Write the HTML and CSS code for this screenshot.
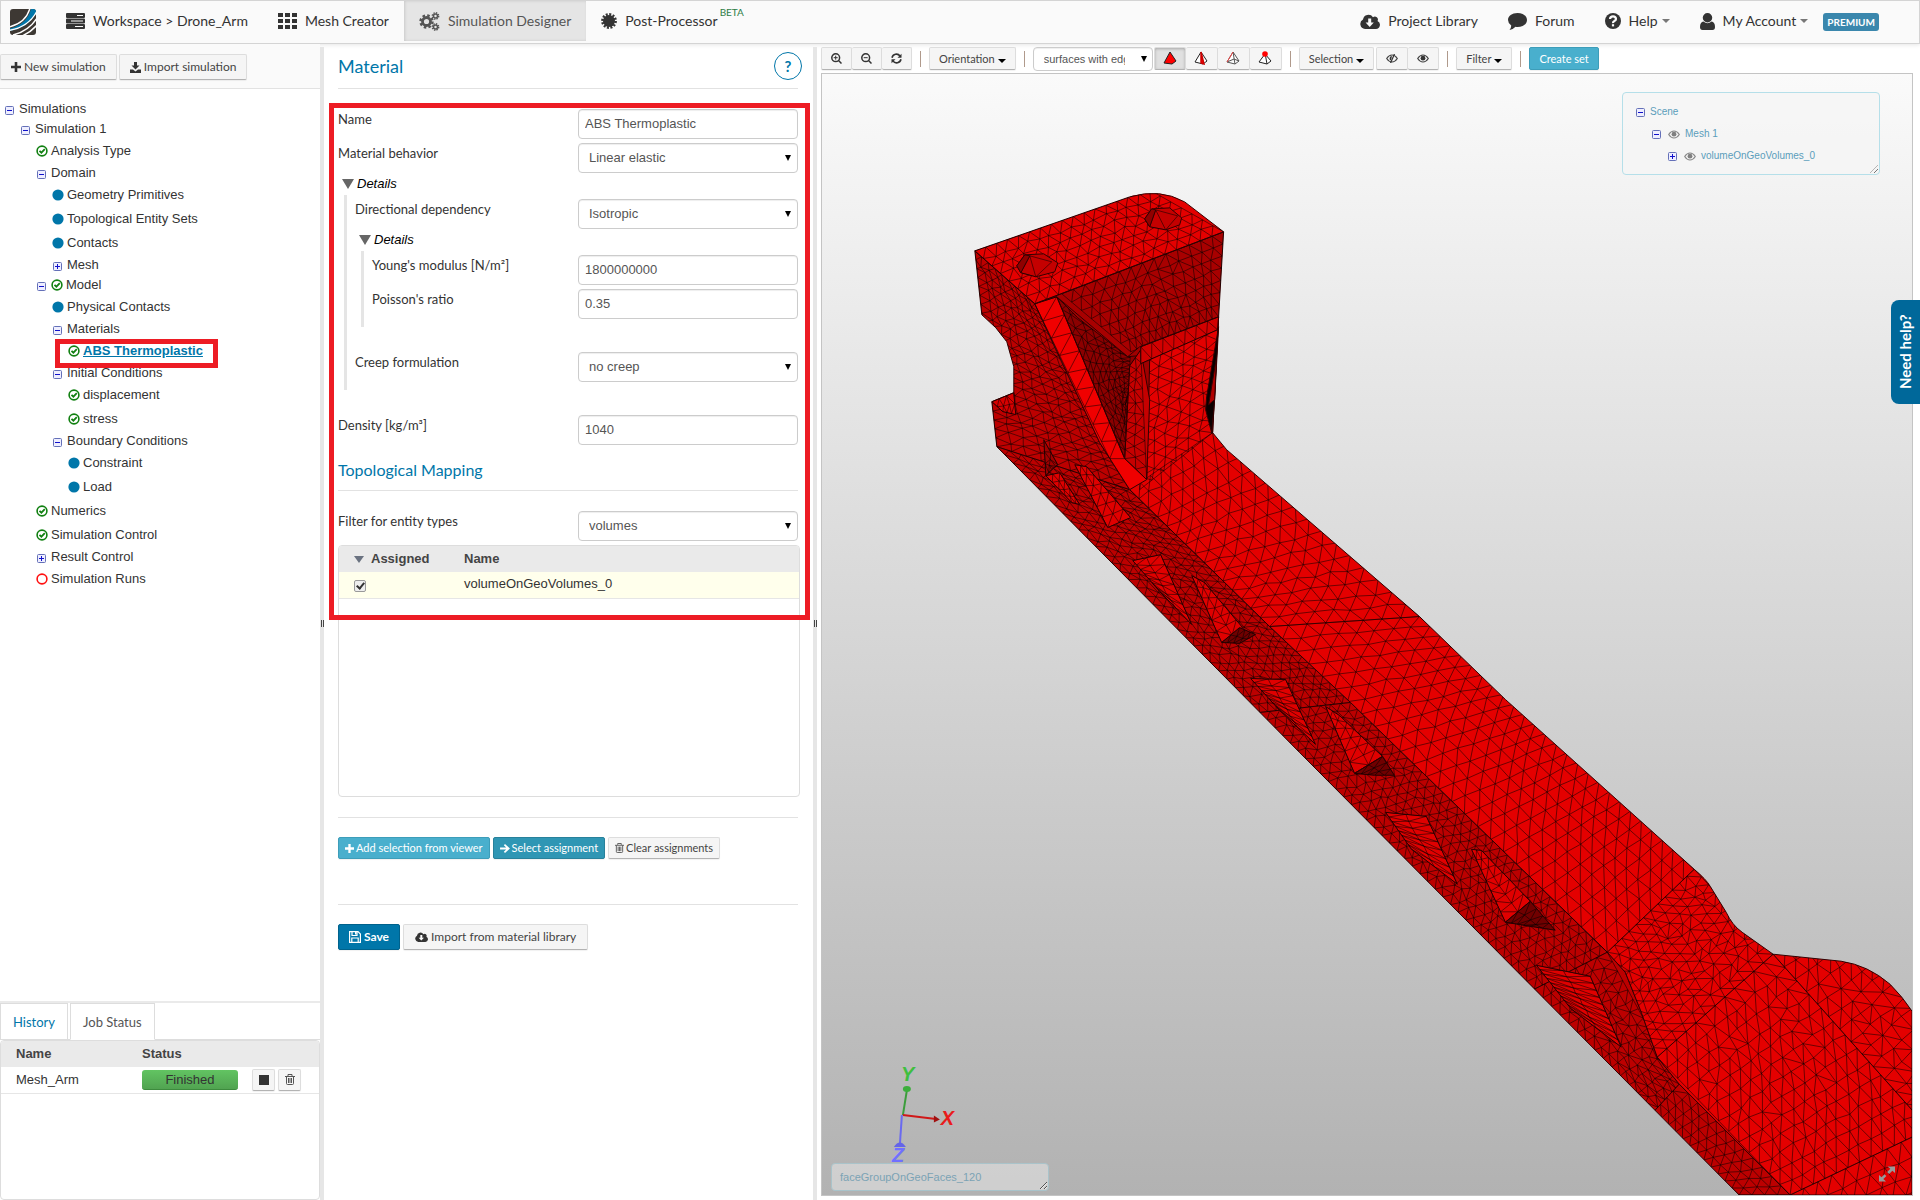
FILE: index.html
```html
<!DOCTYPE html>
<html lang="en">
<head>
<meta charset="utf-8">
<title>Simulation Designer</title>
<link rel="stylesheet" href="styles.css">
</head>
<body>
<svg class="defs" aria-hidden="true">
  <symbol id="i-server" viewBox="0 0 19 16"><path fill="#333" d="M1 0h17q1 0 1 1v3q0 1-1 1H1q-1 0-1-1V1q0-1 1-1zM1 5.500h17q1 0 1 1v3q0 1-1 1H1q-1 0-1-1v-3q0-1 1-1zM1 11h17q1 0 1 1v3q0 1-1 1H1q-1 0-1-1v-3q0-1 1-1z"/><path stroke="#fafafa" d="M11 2.500h6M5 8h12M9 13.500h8"/></symbol>
  <symbol id="i-grid" viewBox="0 0 19 16"><path fill="#333" d="M0 0h5v4H0zM7 0h5v4H7zM14 0h5v4h-5zM0 6h5v4H0zM7 6h5v4H7zM14 6h5v4h-5zM0 12h5v4H0zM7 12h5v4H7zM14 12h5v4h-5z"/></symbol>
  <symbol id="i-gears" viewBox="0 0 21 19"><g fill="none" stroke="#555"><circle cx="7.500" cy="9.500" r="4" stroke-width="2.800"/><circle cx="7.500" cy="9.500" r="6" stroke-width="2.400" stroke-dasharray="2.500 2.212"/><circle cx="16.500" cy="4" r="2" stroke-width="1.500"/><circle cx="16.500" cy="4" r="3.200" stroke-width="1.400" stroke-dasharray="1.400 1.113"/><circle cx="16.500" cy="15" r="2" stroke-width="1.500"/><circle cx="16.500" cy="15" r="3.200" stroke-width="1.400" stroke-dasharray="1.400 1.113"/></g></symbol>
  <symbol id="i-burst" viewBox="0 0 16 16"><circle cx="8" cy="8" r="6" fill="#333"/><circle cx="8" cy="8" r="6.600" fill="none" stroke="#333" stroke-width="2.600" stroke-dasharray="2 1.456"/></symbol>
  <symbol id="i-cloud" viewBox="0 0 20 15"><path d="M5 15a5 5 0 0 1-2-9.400A5.500 5.500 0 0 1 13 3.200 3 3 0 0 1 17.500 7 4.200 4.200 0 0 1 16 15z"/><path fill="#fafafa" d="M8.200 4.500h3v4h2.600L9.700 13 5.600 8.500h2.600z"/></symbol>
  <symbol id="i-chat" viewBox="0 0 19 17"><path fill="#333" d="M9.500 0C15 0 19 3 19 7s-4 7-9.500 7q-1 0-2-.2Q5 16.600 1.500 17q1.800-2 1.700-4.600Q0 10.200 0 7c0-4 4-7 9.500-7z"/></symbol>
  <symbol id="i-help" viewBox="0 0 16 16"><circle cx="8" cy="8" r="8" fill="#333"/><path fill="none" stroke="#fafafa" stroke-width="2.200" d="M5 6q.2-2.600 3-2.600T11 6q0 1.300-1.600 2.100T8 10.200"/><path fill="#fafafa" d="M6.900 11.200h2.200v2.200H6.900z"/></symbol>
  <symbol id="i-user" viewBox="0 0 15 17"><path fill="#333" d="M7.500 0a4.300 4.300 0 0 1 0 9.500 4.300 4.300 0 0 1 0-9.500zM3.500 8.500Q7.500 12 11.500 8.500 15 9 15 14q0 3-2.500 3h-10Q0 17 0 14q0-5 3.500-5.500z"/></symbol>
  <symbol id="i-plus" viewBox="0 0 10 10"><path d="M3.700 0h2.600v3.700H10v2.600H6.300V10H3.700V6.300H0V3.700h3.700z"/></symbol>
  <symbol id="i-download" viewBox="0 0 11 11"><path d="M4 0h3v3.500h2.500l-4 4-4-4H4zM0 7.500h3l2.500 2 2.500-2h3V11H0z"/></symbol>
  <symbol id="i-arrow" viewBox="0 0 11 10"><path d="M5.500 0L11 5l-5.500 5-1.300-1.400L6.800 6.200H0V3.800h6.800L4.200 1.400z"/></symbol>
  <symbol id="i-trash" viewBox="0 0 10 11"><path fill="none" stroke="#555" d="M0 2.500h10M3 2V.5h4V2M1.500 2.500v7q0 1 1 1h5q1 0 1-1v-7M3.500 4v5M5 4v5M6.500 4v5"/></symbol>
  <symbol id="i-save" viewBox="0 0 12 12"><path fill="none" stroke="#fff" stroke-width="1.200" d="M.6.600h8.400l2.400 2.400v8.400H.6zM3 1v3.500h5V1M2.800 11V7h6.400v4"/><path fill="#fff" d="M6 1h1.500v2.500H6z"/></symbol>
  <symbol id="i-zoomin" viewBox="0 0 11 11"><path fill="none" stroke="#333" stroke-width="1.500" d="M7.800 7.800L10.500 10.500M4.700.8a3.900 3.900 0 1 1 0 7.800 3.900 3.900 0 0 1 0-7.800z"/><path stroke="#333" d="M2.700 4.700h4M4.700 2.700v4"/></symbol>
  <symbol id="i-zoomout" viewBox="0 0 11 11"><path fill="none" stroke="#333" stroke-width="1.500" d="M7.800 7.800L10.500 10.500M4.700.8a3.900 3.900 0 1 1 0 7.800 3.900 3.900 0 0 1 0-7.800z"/><path stroke="#333" d="M2.700 4.700h4"/></symbol>
  <symbol id="i-refresh" viewBox="0 0 11 11"><path fill="none" stroke="#333" stroke-width="1.600" d="M1 4.700a4.500 4.500 0 0 1 8-1.700M10 6.300a4.500 4.500 0 0 1-8 1.700"/><path fill="#333" d="M10.500.7v4h-4zM.5 10.300v-4h4z"/></symbol>
  <symbol id="i-eye" viewBox="0 0 12 9"><path fill="none" stroke="#444" stroke-width="1.200" d="M.7 4.500Q3 1 6 1t5.300 3.500Q9 8 6 8T.7 4.500z"/><circle cx="6" cy="4.200" r="2.400" fill="#333"/></symbol>
  <symbol id="i-eyeoff" viewBox="0 0 12 9"><path fill="none" stroke="#444" stroke-width="1.200" d="M.7 4.500Q3 1 6 1t5.300 3.500Q9 8 6 8T.7 4.500z"/><path fill="#333" d="M6 2a2.400 2.400 0 0 0-1 4.600z"/><path stroke="#333" stroke-width="1.200" d="M8.500 0l-4 9"/></symbol>
  <symbol id="i-check" viewBox="0 0 12 12"><circle cx="6" cy="6" r="4.900" fill="none" stroke="#118011" stroke-width="1.600"/><path fill="none" stroke="#118011" stroke-width="1.800" d="M3.500 5.800l1.900 1.900 3.400-3.500"/></symbol>
  <symbol id="i-dot" viewBox="0 0 12 12"><circle cx="6" cy="6" r="5.600" fill="#0076a9"/></symbol>
  <symbol id="i-ring" viewBox="0 0 12 12"><circle cx="6" cy="6" r="4.900" fill="none" stroke="#f11" stroke-width="1.600"/></symbol>
  <symbol id="i-minus-box" viewBox="0 0 9 9"><rect x=".5" y=".5" width="8" height="8" rx="1" fill="#eef" stroke="#6470b8"/><path stroke="#11c" d="M2 4.500h5"/></symbol>
  <symbol id="i-plus-box" viewBox="0 0 9 9"><rect x=".5" y=".5" width="8" height="8" rx="1" fill="#eef" stroke="#6470b8"/><path stroke="#11c" d="M2 4.500h5M4.500 2v5"/></symbol>
  <symbol id="i-logo" viewBox="0 0 26 26"><clipPath id="lc"><rect width="26" height="26" rx="3"/></clipPath><g clip-path="url(#lc)"><path fill="#3d3833" d="M0 0h26v26H0z"/><path fill="#0076a9" d="M0 19.500Q17 15 21 0h5v4Q19 18 0 22z"/><path fill="none" stroke="#fff" stroke-width="1.400" d="M-1 18Q16 14 20-1M-1 21.500Q19 18 27 2M3 26Q19 22 27 9M12 27q9-4 15-11"/></g></symbol>
</svg>

<header class="topbar">
  <a class="logo" href="#" aria-label="Home"><svg width="26" height="26"><use href="#i-logo"/></svg></a>
  <nav class="nav">
    <a href="#"><svg width="19" height="16"><use href="#i-server"/></svg>Workspace &gt; Drone_Arm</a>
    <a href="#"><svg width="19" height="16"><use href="#i-grid"/></svg>Mesh Creator</a>
    <a href="#" class="current"><svg width="21" height="19"><use href="#i-gears"/></svg>Simulation Designer</a>
    <a href="#"><svg width="16" height="16"><use href="#i-burst"/></svg>Post-Processor<sup>BETA</sup></a>
  </nav>
  <nav class="nav nav-right">
    <a href="#"><svg width="20" height="15" fill="#333"><use href="#i-cloud"/></svg>Project Library</a>
    <a href="#"><svg width="19" height="17"><use href="#i-chat"/></svg>Forum</a>
    <a href="#"><svg width="16" height="16"><use href="#i-help"/></svg>Help<i class="caret"></i></a>
    <a href="#"><svg width="15" height="17"><use href="#i-user"/></svg>My Account<i class="caret"></i></a>
  </nav>
  <span class="premium">PREMIUM</span>
</header>

<main class="workbench">
  <aside class="sidebar">
    <div class="actions">
      <button class="btn"><svg width="10" height="10" fill="#333"><use href="#i-plus"/></svg>New simulation</button>
      <button class="btn"><svg width="11" height="11" fill="#333"><use href="#i-download"/></svg>Import simulation</button>
    </div>
    <ul class="tree">
      <li class="l0 fold"><svg class="box"><use href="#i-minus-box"/></svg>Simulations</li>
      <li class="l1 fold"><svg class="box"><use href="#i-minus-box"/></svg>Simulation 1</li>
      <li class="l2"><svg><use href="#i-check"/></svg>Analysis Type</li>
      <li class="l2 fold"><svg class="box"><use href="#i-minus-box"/></svg>Domain</li>
      <li class="l3"><svg><use href="#i-dot"/></svg>Geometry Primitives</li>
      <li class="l3"><svg><use href="#i-dot"/></svg>Topological Entity Sets</li>
      <li class="l3"><svg><use href="#i-dot"/></svg>Contacts</li>
      <li class="l3 fold"><svg class="box"><use href="#i-plus-box"/></svg>Mesh</li>
      <li class="l2 fold"><svg class="box"><use href="#i-minus-box"/></svg><svg><use href="#i-check"/></svg>Model</li>
      <li class="l3"><svg><use href="#i-dot"/></svg>Physical Contacts</li>
      <li class="l3 fold"><svg class="box"><use href="#i-minus-box"/></svg>Materials</li>
      <li class="l4 marked"><svg><use href="#i-check"/></svg><a href="#">ABS Thermoplastic</a></li>
      <li class="l3 fold"><svg class="box"><use href="#i-minus-box"/></svg>Initial Conditions</li>
      <li class="l4"><svg><use href="#i-check"/></svg>displacement</li>
      <li class="l4"><svg><use href="#i-check"/></svg>stress</li>
      <li class="l3 fold"><svg class="box"><use href="#i-minus-box"/></svg>Boundary Conditions</li>
      <li class="l4"><svg><use href="#i-dot"/></svg>Constraint</li>
      <li class="l4"><svg><use href="#i-dot"/></svg>Load</li>
      <li class="l2"><svg><use href="#i-check"/></svg>Numerics</li>
      <li class="l2"><svg><use href="#i-check"/></svg>Simulation Control</li>
      <li class="l2 fold"><svg class="box"><use href="#i-plus-box"/></svg>Result Control</li>
      <li class="l2"><svg><use href="#i-ring"/></svg>Simulation Runs</li>
    </ul>
    <section class="jobs">
      <div class="tabs">
        <button class="tab">History</button>
        <button class="tab active">Job Status</button>
      </div>
      <div class="grid-box">
        <table class="data job-table">
          <thead><tr><th class="c-name">Name</th><th class="c-status">Status</th><th></th></tr></thead>
          <tbody><tr><td class="c-name">Mesh_Arm</td><td class="c-status"><span class="finished">Finished</span></td>
            <td><div class="row-tools"><button class="btn tiny" aria-label="Stop"><i class="stop"></i></button><button class="btn tiny" aria-label="Delete"><svg width="10" height="11"><use href="#i-trash"/></svg></button></div></td></tr></tbody>
        </table>
      </div>
    </section>
  </aside>
  <div class="splitter"></div>

  <section class="panel">
    <div class="panel-head"><h1>Material</h1><button class="round" aria-label="Help">?</button></div>
    <form class="form">
      <div class="row"><label for="name">Name</label><input id="name" type="text" value="ABS Thermoplastic"></div>
      <div class="row"><label for="behavior">Material behavior</label><span class="select"><select id="behavior"><option>Linear elastic</option></select></span></div>
      <details open>
        <summary>Details</summary>
        <div class="nest">
          <div class="row"><label for="dir">Directional dependency</label><span class="select"><select id="dir"><option>Isotropic</option></select></span></div>
          <details open>
            <summary>Details</summary>
            <div class="nest">
              <div class="row"><label for="young">Young's modulus [N/m²]</label><input id="young" type="text" value="1800000000"></div>
              <div class="row"><label for="poisson">Poisson's ratio</label><input id="poisson" type="text" value="0.35"></div>
            </div>
          </details>
          <div class="row"><label for="creep">Creep formulation</label><span class="select"><select id="creep"><option>no creep</option></select></span></div>
        </div>
      </details>
      <div class="row"><label for="density">Density [kg/m³]</label><input id="density" type="text" value="1040"></div>
      <h2>Topological Mapping</h2>
      <div class="row"><label for="types">Filter for entity types</label><span class="select"><select id="types"><option>volumes</option></select></span></div>
      <div class="grid-box entities">
        <table class="data">
          <thead><tr><th class="c-assigned"><i class="sort"></i>Assigned</th><th>Name</th></tr></thead>
          <tbody><tr class="picked"><td class="c-assigned"><input type="checkbox" id="vol0" checked></td><td><label for="vol0">volumeOnGeoVolumes_0</label></td></tr></tbody>
        </table>
      </div>
      <div class="form-actions small">
        <button type="button" class="btn info"><svg width="9" height="9" fill="#fff"><use href="#i-plus"/></svg>Add selection from viewer</button>
        <button type="button" class="btn teal"><svg width="10" height="9" fill="#fff"><use href="#i-arrow"/></svg>Select assignment</button>
        <button type="button" class="btn"><svg width="9" height="10"><use href="#i-trash"/></svg>Clear assignments</button>
      </div>
      <div class="form-actions">
        <button type="button" class="btn primary"><svg width="12" height="12"><use href="#i-save"/></svg>Save</button>
        <button type="button" class="btn wide"><svg width="13" height="10" fill="#333"><use href="#i-cloud"/></svg>Import from material library</button>
      </div>
      <div class="outline-box"></div>
    </form>
  </section>
  <div class="splitter"></div>

  <section class="viewer">
    <div class="toolbar">
      <div class="group"><button class="btn" aria-label="Zoom in"><svg width="11" height="11"><use href="#i-zoomin"/></svg></button><button class="btn" aria-label="Zoom out"><svg width="11" height="11"><use href="#i-zoomout"/></svg></button><button class="btn" aria-label="Reset view"><svg width="11" height="11"><use href="#i-refresh"/></svg></button></div>
      <i class="sep"></i>
      <button class="btn menu">Orientation<i class="caret"></i></button>
      <i class="sep"></i>
      <div class="group modes"><span class="select mode"><select aria-label="Render mode"><option>surfaces with edges</option></select></span>
        <button class="btn on" aria-label="Volumes"><svg width="14" height="14"><path d="M7 1L1 12l8 1 4-3z" fill="red" stroke="#222"/></svg></button><button class="btn" aria-label="Faces"><svg width="14" height="14"><path d="M7 1L1 11l8 2 4-3z" fill="#fff" stroke="#222"/><path d="M7 1v11l3 1z" fill="red" stroke="#c00" stroke-width="1.500"/></svg></button><button class="btn" aria-label="Edges"><svg width="14" height="14"><path d="M7 1L1 11l8 2 4-3zM7 1l2 12M1 11l7-3 5 2" fill="#fff" stroke="#555"/><path d="M7 1L1 11" stroke="#e44"/></svg></button><button class="btn" aria-label="Nodes"><svg width="14" height="14"><path d="M7 3L1 11l8 2 4-3zM7 2l2 11" fill="#fff" stroke="#222"/><circle cx="7" cy="3" r="2.800" fill="red"/></svg></button></div>
      <i class="sep"></i>
      <div class="group"><button class="btn menu">Selection<i class="caret"></i></button><button class="btn split" aria-label="Hide"><svg width="12" height="9"><use href="#i-eyeoff"/></svg></button><button class="btn" aria-label="Show"><svg width="12" height="9"><use href="#i-eye"/></svg></button></div>
      <i class="sep"></i>
      <button class="btn menu">Filter<i class="caret"></i></button>
      <i class="sep"></i>
      <button class="btn info">Create set</button>
    </div>
    <div class="stage">
      <svg id="scene" class="scene" viewBox="822 74 1091 1122" preserveAspectRatio="xMaxYMax slice" role="img" aria-label="Meshed drone arm"></svg>
      <div class="scene-tree">
        <div class="s0"><svg class="box"><use href="#i-minus-box"/></svg>Scene</div>
        <div class="s1"><svg class="box"><use href="#i-minus-box"/></svg><svg class="eye"><use href="#i-eye"/></svg>Mesh 1</div>
        <div class="s2"><svg class="box"><use href="#i-plus-box"/></svg><svg class="eye"><use href="#i-eye"/></svg>volumeOnGeoVolumes_0</div>
      </div>
      <textarea class="picked-name" aria-label="Hovered entity">faceGroupOnGeoFaces_120</textarea>
      <svg class="expand" width="18" height="18" viewBox="0 0 18 18"><path fill="#999" d="M9.500 1.500H17V8l-2.600-2.200-3.300 3.100-2-1.900 3.200-3.200zM8 16.500H1V10l2.500 2.200 3-2.900 1.900 1.800-3 3z"/></svg>
    </div>
  </section>
  <button class="need-help">Need help?</button>
</main>
<script src="scene.js"></script>
</body>
</html>
```
FILE: styles.css
```css
*, *::before, *::after { box-sizing: border-box; }
body { margin: 0; min-height: 100vh; display: flex; flex-direction: column; background: #fff; color: #333; font: 13px/20px "Liberation Sans", Arial, sans-serif; }
a { color: inherit; text-decoration: none; }
svg { display: block; flex: none; }
.defs { position: absolute; width: 0; height: 0; }
button, select, input, textarea { font: inherit; color: inherit; margin: 0; }

.topbar { height: 44px; display: flex; align-items: center; background: #fafafa; border: 1px solid #d4d4d4; box-shadow: 0 1px 4px rgba(0,0,0,.1); font: 14px/20px Lato, sans-serif; position: relative; }
.logo { margin: 0 15px 0 9px; }
.nav { display: flex; height: 40px; align-self: flex-start; }
.nav a { display: flex; align-items: center; gap: 8px; padding: 0 15px; }
.nav a.current { background: #e5e5e5; color: #555; box-shadow: inset 1px 0 3px rgba(0,0,0,.12); }
.nav sup { font-size: 10px; line-height: 12px; color: #2e7d46; align-self: flex-start; margin: 5px 0 0 -6px; }
.nav-right { margin-left: auto; }
.caret { width: 0; border: 4px solid transparent; border-top-color: #777; border-bottom: 0; margin-left: -4px; }
.premium { background: #3a87ad; color: #fff; border-radius: 3px; font: bold 10px/18px Lato, sans-serif; padding: 0 4px; margin: 0 40px 0 0; }

.workbench { flex: 1; display: grid; grid-template-columns: 320px 4px 489px 4px minmax(0, 1fr); position: relative; }
.splitter { background: #e6e6e6; margin-top: 3px; display: flex; align-items: center; justify-content: center; }
.splitter::before { content: ""; width: 3px; height: 7px; border: solid #444; border-width: 0 1px; }

.btn { display: inline-flex; align-items: center; justify-content: center; gap: 3px; height: 26px; padding: 0 10px; border: 1px solid #ddd; border-bottom-color: #b3b3b3; border-radius: 2px; background: #f5f5f5; color: #444; font: 12px/16px Lato, sans-serif; white-space: nowrap; box-shadow: 0 1px 1px rgba(0,0,0,.06); }
.info { background: #49afcd; border-color: #3d9db9; color: #fff; }
.teal { background: #2f96b4; border-color: #28819b; color: #fff; }
.primary { background: #0076a9; border-color: #00628c; color: #fff; font-weight: bold; }

.sidebar { display: flex; flex-direction: column; }
.actions { display: flex; gap: 2px; height: 45px; padding-top: 10px; background: #fafafa; border-bottom: 1px solid #e2e2e2; }
.tree { list-style: none; margin: 10px 0 0; padding: 0; flex: 1; }
.tree li { height: 24px; display: flex; align-items: center; gap: 3px; position: relative; }
.tree li.fold { height: 20px; }
.tree svg { width: 12px; height: 12px; }
.tree svg.box { width: 9px; height: 9px; margin: 3px 2px 0 1px; }
.l0 { padding-left: 4px; } .l1 { padding-left: 20px; } .l2 { padding-left: 36px; } .l3 { padding-left: 52px; } .l4 { padding-left: 68px; }
.marked a { color: #0076a9; font-weight: bold; text-decoration: underline; }
.marked::after { content: ""; position: absolute; left: 55px; top: 0; width: 163px; height: 29px; border: 5px solid #ed1c24; z-index: 1; }

.jobs { height: 199px; display: flex; flex-direction: column; border-top: 2px solid #eaeaea; }
.tabs { display: flex; gap: 2px; height: 37px; border-bottom: 1px solid #ddd; }
.tab { height: 37px; padding: 0 12px; border: 1px solid #ddd; background: #fff; font: 13px/20px Lato, sans-serif; color: #0076a9; }
.tab.active { color: #555; border-bottom-color: #fff; }
.grid-box { border: 1px solid #ddd; border-radius: 4px; overflow: hidden; background: #fff; }
.jobs .grid-box { flex: 1; }
.data { width: 100%; border-collapse: collapse; }
.data th { height: 26px; padding: 0; background: #eaeaea; text-align: left; color: #444; }
.data td { height: 26px; padding: 0; border-bottom: 1px solid #e6e6e6; line-height: 16px; }
.data .c-name { width: 141px; padding-left: 15px; }
.c-status { width: 110px; }
.finished { display: block; width: 96px; height: 20px; border-radius: 3px; background: linear-gradient(#62c462, #51a351); border-bottom: 1px solid #3d8b3d; text-align: center; line-height: 20px; }
.row-tools { display: flex; gap: 3px; }
.tiny { width: 23px; height: 22px; padding: 0; }
.stop { width: 10px; height: 10px; background: #333; }

.panel { padding: 0 15px 20px 14px; }
.panel-head { height: 45px; border-bottom: 1px solid #e2e2e2; display: flex; align-items: center; justify-content: space-between; }
h1 { margin: 0; font: 18px/24px Lato, sans-serif; color: #0076a9; }
h2 { margin: 0 0 20px; height: 42px; border-bottom: 1px solid #e2e2e2; font: 16px/42px Lato, sans-serif; color: #0076a9; }
.round { width: 28px; height: 28px; margin-right: -4px; padding: 0; border: 1px solid #0076a9; border-radius: 50%; background: #fff; color: #0076a9; font: bold 15px/24px Lato, sans-serif; }
.form { position: relative; padding-top: 20px; }
.outline-box { position: absolute; left: -9px; top: 14px; width: 481px; height: 517px; border: 5px solid #ed1c24; pointer-events: none; }
.row { display: grid; grid-template-columns: 1fr 220px; margin-bottom: 4px; }
.row label { font: 13px/20px Lato, sans-serif; }
.row input, .select select { width: 100%; height: 30px; border: 1px solid #ccc; border-radius: 4px; background: #fff; color: #555; padding: 0 6px 2px; box-shadow: inset 0 1px 1px rgba(0,0,0,.07); }
.select { position: relative; display: block; }
.select select { appearance: none; padding: 0 10px; }
.select::after { content: ""; position: absolute; right: 7px; top: 12px; width: 0; border: 3px solid transparent; border-top: 6px solid #000; border-bottom: 0; pointer-events: none; }
summary { list-style: none; display: flex; align-items: center; gap: 3px; height: 18px; padding: 0 0 4px 4px; font-style: italic; color: #000; }
summary::before { content: ""; width: 0; border: 6px solid transparent; border-top: 10px solid #666; border-bottom: 0; }
.nest { margin: 0 0 25px 6px; padding: 4px 0 4px 8px; border-left: 3px solid #e5e5e5; }
.entities { height: 252px; margin: 0 -2px 20px 0; }
.data .c-assigned { width: 125px; padding-left: 15px; }
.sort { display: inline-block; border: 5px solid transparent; border-top: 7px solid #6a7280; border-bottom: 0; margin-right: 7px; }
.picked { background: #ffffec; }
.picked label { display: block; padding-bottom: 2px; }
.picked input { appearance: none; display: block; position: relative; width: 12px; height: 12px; margin-top: 3px; border: 1px solid #999; border-radius: 2px; background: #eee; }
.picked input:checked::after { content: ""; position: absolute; left: 3px; top: 0; width: 5px; height: 8px; border: solid #333; border-width: 0 2px 2px 0; transform: rotate(40deg); }
.form-actions { display: flex; gap: 3px; border-top: 1px solid #e2e2e2; padding-top: 19px; }
.form-actions.small { margin-bottom: 45px; }
.small .btn { height: 22px; padding: 0 6px; font-size: 11px; gap: 2px; }
.form-actions .wide { padding: 0 11px; }

.viewer { display: flex; flex-direction: column; padding: 3px 7px 4px 4px; min-width: 0; }
.toolbar { display: flex; align-items: center; gap: 8px; height: 26px; padding-bottom: 3px; }
.toolbar .btn { height: 23px; font-size: 11px; padding: 0 9px; }
.group { display: flex; }
.group .split { margin-left: 2px; }
.group .btn + .btn { border-left-width: 0; }
.group .btn.split { border-left-width: 1px; }
.modes .btn { width: 32px; padding: 0; }
.btn.on { background: #e0e0e0; box-shadow: inset 0 1px 3px rgba(0,0,0,.25); margin-left: 1px; }
.menu .caret { margin: 4px 0 0 0; border-top-color: #000; }
.toolbar .sep { width: 1px; height: 16px; background: #b09a8c; }
.mode { width: 120px; }
.select.mode select { height: 24px; font-size: 11px; padding: 0 27px 0 10px; text-overflow: clip; }
.select.mode::after { top: 9px; right: 6px; }
.stage { flex: 1; position: relative; border: 1px solid #c4c4c4; background: linear-gradient(#fafafa, #b2b2b2); min-height: 600px; overflow: hidden; }
.scene { position: absolute; inset: 0; width: 100%; height: 100%; }
.scene-tree { position: absolute; right: 32px; top: 18px; width: 258px; height: 83px; border: 1px solid #b5dfe9; border-radius: 4px; background: rgba(245,245,245,.7); color: #5b9dbb; font-size: 10px; padding: 8px 0 0 13px; }
.scene-tree div { display: flex; align-items: center; gap: 5px; height: 22px; }
.scene-tree .s1 { padding-left: 16px; } .scene-tree .s2 { padding-left: 32px; }
.scene-tree .box { width: 9px; height: 9px; }
.scene-tree .eye { width: 12px; height: 9px; margin-left: 2px; opacity: .6; }
.scene-tree::after { content: ""; position: absolute; right: 1px; bottom: 1px; width: 8px; height: 8px; background: repeating-linear-gradient(135deg, transparent 0 2px, #777 2px 3px); clip-path: polygon(100% 0, 100% 100%, 0 100%); }
.picked-name { position: absolute; left: 9px; bottom: 4px; width: 218px; height: 28px; border: 1px solid #a9c3ca; border-radius: 4px; background: rgba(220,220,220,.7); color: #7ba3b5; font-size: 11px; line-height: 16px; padding: 5px 8px; overflow: hidden; resize: both; }
.expand { position: absolute; right: 16px; bottom: 12px; }
.need-help { position: absolute; right: 0; top: 256px; width: 29px; height: 104px; padding: 0; border: 0; border-radius: 0 8px 8px 0; background: #00689a; color: #fff; font: bold 15px/29px Lato, sans-serif; writing-mode: vertical-rl; transform: rotate(180deg); }
```
FILE: scene.js
```js
// Draws the meshed drone arm: shaded faces, each overlaid with a triangulated grid.
const scene = document.getElementById('scene');
let seed = 7;
const rnd = () => (seed = (seed * 16807) % 2147483647) / 2147483647 - 0.5;

// quad: [a, b, c, d] runs a->b across u and a->d across v
function grid([a, b, c, d], nu, nv, jitter) {
  const p = [];
  for (let j = 0; j <= nv; j++) {
    p.push([]);
    for (let i = 0; i <= nu; i++) {
      const u = i / nu, v = j / nv;
      const at = k => (a[k] * (1 - u) + b[k] * u) * (1 - v) + (d[k] * (1 - u) + c[k] * u) * v;
      const edge = i === 0 || j === 0 || i === nu || j === nv;
      p[j].push([at(0) + (edge ? 0 : rnd() * jitter), at(1) + (edge ? 0 : rnd() * jitter)]);
    }
  }
  const f = q => q[0].toFixed(1) + ' ' + q[1].toFixed(1);
  const dist = (m, n) => Math.hypot(m[0] - n[0], m[1] - n[1]);
  let s = '';
  for (let j = 0; j <= nv; j++) s += 'M' + p[j].map(f).join('L');
  for (let i = 0; i <= nu; i++) s += 'M' + p.map(r => f(r[i])).join('L');
  // split every cell along its shorter diagonal
  for (let j = 0; j < nv; j++) for (let i = 0; i < nu; i++) {
    const one = [p[j][i], p[j + 1][i + 1]], two = [p[j][i + 1], p[j + 1][i]];
    s += 'M' + (dist(...one) < dist(...two) ? one : two).map(f).join('L');
  }
  return s;
}

const faces = [
  // solid base behind the recessed corner
  { fill: '#a00000', d: 'M1057 297L1219 317 1213 433 1150 480 1125 459Z', m: [] },
  // side of the arm and of the mounting block
  { fill: '#bc0000', d: 'M975 251L1035 304 1057 352 1100 443 1130 490 1270 627 1351 703 1608 953 1626 973 1642 1013 1658 1058 1680 1085 1791 1196 1740 1196 1300 753 997 447 992 402 1014 393 1014 367 1007 342 996 328 982 315Z',
    m: [[[[975,251],[1035,304],[1130,490],[997,447]], 9, 22, 4], [[[997,447],[1130,490],[1351,703],[1260,713]], 11, 32, 4], [[[1260,713],[1351,703],[1608,953],[1535,990]], 9, 36, 4], [[[1535,990],[1608,953],[1680,1085],[1655,1112]], 7, 14, 4], [[[1655,1112],[1680,1085],[1791,1196],[1740,1196]], 4, 12, 2]] },
  // upper surface, down to the far paddle
  { fill: '#e40000', d: 'M1125 459L1147 480 1150 360 1219 317 1213 433 1227 450 1420 617 1506 700 1695 870Q1707 880 1711 887L1727 913Q1733 926 1743 933L1774 955 1842 962Q1869 966 1891 985 1904 998 1913 1012V1196H1791L1680 1085 1658 1058 1642 1013 1626 973 1608 953 1351 703 1270 627 1130 490 1100 443Z',
    m: [[[[1130,490],[1213,433],[1420,617],[1270,627]], 8, 15, 3], [[[1150,360],[1219,317],[1213,433],[1140,490]], 6, 10, 4], [[[1270,627],[1420,617],[1695,870],[1608,953]], 8, 26, 2], [[[1608,953],[1695,870],[1774,955],[1658,1058]], 12, 11, 5], [[[1658,1058],[1774,955],[1930,1130],[1791,1196]], 12, 13, 4], [[[1774,955],[1860,900],[1990,1060],[1930,1130]], 7, 14, 4], [[[1791,1196],[1930,1130],[1990,1200],[1840,1260]], 10, 5, 3]] },
  // lip below the clamp cut-out
  { fill: '#d80000', d: 'M992 402L1014 393 1016 415 1003 412Z', m: [[[[992,402],[1014,393],[1016,415],[1003,412]], 3, 2, 1]] },
  // front wall of the block and its concave corner
  { fill: '#a80000', d: 'M1035 304L1224 232 1219 317 1140 347 1128 357 1057 297Z', m: [[[[1062,294],[1224,232],[1219,317],[1131,352]], 14, 7, 3]] },
  { fill: '#8c0000', d: 'M1057 297L1078 318 1128 357 1138 356 1125 459Z', m: [[[[1057,297],[1131,350],[1128,400],[1125,459]], 7, 13, 3]] },
  { fill: '#c60000', d: 'M1130 366L1141 350 1150 400 1147 480 1125 459Z', m: [[[[1130,366],[1141,350],[1147,480],[1125,459]], 2, 10, 3]] },
  { fill: '#d20000', d: 'M1141 347L1219 317 1218 330 1141 364Z', m: [[[[1141,347],[1219,317],[1218,330],[1141,364]], 7, 1, 0]] },
  // bright bevel strip
  { fill: '#f00000', d: 'M1035 304L1057 297 1125 459 1147 480 1130 490 1100 443Z', m: [[[[1035,304],[1057,297],[1125,459],[1110,459]], 1, 9, 0]] },
  // top of the block
  { fill: '#e40000', d: 'M975 251L1130 197Q1160 188 1185 202L1224 232 1035 304Z', m: [[[[975,251],[1150,190],[1224,232],[1035,304]], 16, 7, 4]] },
  // shadow gap on the far edge
  { fill: '#0a0000', d: 'M1219 327L1207 397 1206 410 1212 433 1215 400Z', m: [] },
  { fill: '#b00000', d: 'M1217 357L1209 405 1215 400Z', m: [] },
  // screw holes
  { fill: '#c40000', d: 'M1017 266L1025 255 1044 254 1058 263 1055 272 1036 277 1021 273Z', m: [[[[1021,273],[1030,256],[1052,262],[1036,277]], 1, 1, 0]] },
  { fill: '#900000', d: 'M1017 266L1025 255 1030 256 1021 273Z', m: [] },
  { fill: '#c40000', d: 'M1145 219L1152 209 1170 208 1182 218 1180 225 1166 230 1150 227Z', m: [[[[1150,227],[1156,210],[1178,216],[1166,230]], 1, 1, 0]] },
  { fill: '#900000', d: 'M1145 219L1152 209 1156 210 1150 227Z', m: [] }
];

// truss pockets cut into the side
const pockets = [
  ['#a00000', [1044,440], [1058,465], [1052,470], [1046,476]],
  ['#e00000', [1046,476], [1060,473], [1080,505], [1072,503]],
  ['#e00000', [1075,465], [1087,467], [1131,518], [1108,528]],
  ['#e00000', [1133,561], [1161,555], [1192,625], [1160,592]],
  ['#e00000', [1192,576], [1205,583], [1243,628], [1222,643]],
  ['#700000', [1222,643], [1240,628], [1256,635], [1240,644]],
  ['#e00000', [1251,679], [1286,680], [1316,745], [1280,711]],
  ['#e00000', [1326,707], [1340,716], [1383,757], [1355,774]],
  ['#700000', [1355,774], [1383,757], [1395,776], [1375,776]],
  ['#e00000', [1386,813], [1427,817], [1458,885], [1412,850]],
  ['#e00000', [1472,850], [1482,851], [1531,902], [1506,923]],
  ['#700000', [1506,923], [1531,902], [1556,931], [1530,927]],
  ['#e00000', [1537,966], [1591,977], [1622,1048], [1572,1010]]
];
for (const [fill, ...q] of pockets) {
  const size = Math.hypot(q[0][0] - q[2][0], q[0][1] - q[2][1]);
  faces.push({ fill, d: 'M' + q.map(p => p.join(' ')).join('L') + 'Z', m: [[q, 2, Math.max(2, Math.round(size / 12)), 2]] });
}

let out = '';
faces.forEach((f, i) => {
  out += `<clipPath id="f${i}"><path d="${f.d}"/></clipPath><path d="${f.d}" fill="${f.fill}" stroke="#300" stroke-width="1"/>`;
  out += `<path clip-path="url(#f${i})" fill="none" stroke="#000" stroke-width=".8" stroke-opacity=".65" d="${f.m.map(a => grid(...a)).join('')}"/>`;
});
out += `<g font-family="Liberation Sans, sans-serif" font-weight="bold" font-style="italic" font-size="20" stroke-width="2">
<path d="M903 1116L907 1091" stroke="#3b9d3b"/><ellipse cx="907" cy="1090" rx="4" ry="3" fill="#3cae3c"/><text x="901" y="1082" fill="#3fbf3f">Y</text>
<path d="M903 1116L936 1120" stroke="#d01818"/><path d="M934 1116.500L940 1120.500 934 1123.500Z" fill="#a01010"/><text x="941" y="1126" fill="#e81c1c">X</text>
<path d="M902 1116L900 1145" stroke="#6a6af0"/><path d="M894 1148Q900 1139 906 1148Z" fill="#6464e8"/><text x="892" y="1163" fill="#7070ff">Z</text></g>`;
scene.innerHTML = out;
```
